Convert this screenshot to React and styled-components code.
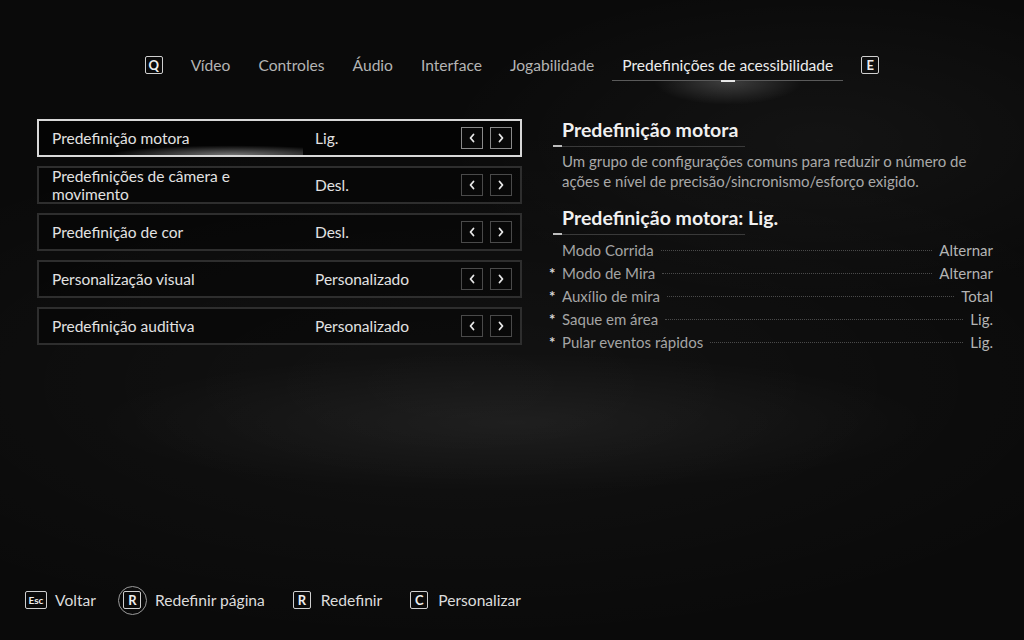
import React from 'react';
import styled, { createGlobalStyle } from 'styled-components';

const GlobalStyle = createGlobalStyle`
  html, body {
    margin: 0;
    padding: 0;
    background: #0a0a0a;
  }
  * {
    box-sizing: border-box;
  }
`;

const Page = styled.div`
  width: 1024px;
  height: 640px;
  overflow: hidden;
  display: flex;
  flex-direction: column;
  font-family: Lato, "Open Sans", sans-serif;
  color: #dcdcdc;
  background:
    radial-gradient(ellipse 420px 70px at 50% 66%, rgba(255, 255, 255, 0.06), transparent),
    radial-gradient(ellipse 380px 160px at 80% 22%, rgba(255, 255, 255, 0.04), transparent),
    radial-gradient(ellipse 700px 260px at 45% 60%, rgba(255, 255, 255, 0.035), transparent),
    #0a0a0a;
`;

const TabBar = styled.nav`
  display: flex;
  justify-content: center;
  align-items: flex-start;
  gap: 8px;
  padding-top: 55px;
`;

const KeyCap = styled.span`
  display: inline-flex;
  align-items: center;
  justify-content: center;
  min-width: ${({ $w }) => $w || 18}px;
  height: 18px;
  padding: 0 2px;
  border: 1.5px solid #cfcfcf;
  border-radius: 2px;
  font-size: ${({ $small }) => ($small ? 10 : 13)}px;
  font-weight: 700;
  color: #eeeeee;
  line-height: 1;
  margin: ${({ $m }) => $m || '0'};
`;

const Tab = styled.div`
  position: relative;
  padding: 0 10px 5px;
  font-size: 15.6px;
  line-height: 20px;
  color: ${({ $active }) => ($active ? '#ececec' : '#b4b4b4')};
  border-bottom: 1px solid ${({ $active }) => ($active ? '#5a5a5a' : 'transparent')};
  white-space: nowrap;

  ${({ $active }) =>
    $active &&
    `
    &::before {
      content: '';
      position: absolute;
      left: 50%;
      bottom: -2px;
      width: 14px;
      height: 2px;
      margin-left: -7px;
      background: #e6e6e6;
    }
    &::after {
      content: '';
      position: absolute;
      left: 50%;
      top: 26px;
      width: 150px;
      height: 24px;
      margin-left: -75px;
      background: radial-gradient(ellipse at 50% 0%, rgba(255,255,255,0.2), transparent 70%);
    }
  `}
`;

const Main = styled.main`
  display: flex;
  align-items: flex-start;
  gap: 31px;
  padding: 0 0 0 37px;
  margin-top: 38px;
`;

const OptionList = styled.div`
  width: 485px;
  display: flex;
  flex-direction: column;
  gap: 9px;
`;

const OptionRow = styled.div`
  position: relative;
  height: 38px;
  display: flex;
  align-items: center;
  padding: 0 8px 0 13px;
  border: ${({ $active }) => ($active ? '2px solid #d8d8d8' : '2px solid #2e2e2e')};
  background: ${({ $active }) => ($active ? 'rgba(0,0,0,0.55)' : 'rgba(0,0,0,0.35)')};

  ${({ $active }) =>
    $active &&
    `
    &::after {
      content: '';
      position: absolute;
      left: 10px;
      bottom: 0;
      width: 254px;
      height: 12px;
      background: radial-gradient(ellipse 60% 100% at 72% 100%, rgba(255,255,255,0.45), transparent 80%);
      pointer-events: none;
    }
  `}
`;

const OptionLabel = styled.div`
  width: 263px;
  padding-right: 40px;
  font-size: 15.5px;
  line-height: 18px;
  color: #e2e2e2;
`;

const OptionValue = styled.div`
  flex: 1;
  font-size: 15.5px;
  color: #e2e2e2;
`;

const ArrowGroup = styled.div`
  display: flex;
  gap: 7px;
`;

const ArrowButton = styled.span`
  width: 22px;
  height: 22px;
  display: flex;
  align-items: center;
  justify-content: center;
  border: 1px solid ${({ $active }) => ($active ? '#8a8a8a' : '#4a4a4a')};
  background: #080808;
`;

const Chevron = ({ dir }) => (
  <svg width="8" height="10" viewBox="0 0 8 10">
    <path
      d={dir === 'left' ? 'M5.5 1.5 L2.5 5 L5.5 8.5' : 'M2.5 1.5 L5.5 5 L2.5 8.5'}
      fill="none"
      stroke="#e8e8e8"
      strokeWidth="1.8"
      strokeLinecap="round"
      strokeLinejoin="round"
    />
  </svg>
);

const Details = styled.section`
  width: 440px;
  display: flex;
  flex-direction: column;
`;

const DetailTitle = styled.h3`
  margin: ${({ $top }) => $top || 0}px 0 0;
  padding-left: 9px;
  font-size: 19.5px;
  line-height: 22px;
  font-weight: 700;
  color: #f0f0f0;
`;

const TitleRule = styled.div`
  position: relative;
  width: 192px;
  height: 1px;
  margin-top: 5px;
  background: #3a3a3a;

  &::before {
    content: '';
    position: absolute;
    left: 0;
    top: -1px;
    width: 9px;
    height: 2px;
    background: #bdbdbd;
  }
`;

const Description = styled.p`
  margin: 4px 0 0;
  padding-left: 9px;
  font-size: 15px;
  line-height: 20px;
  color: #a9a9a9;
`;

const SummaryList = styled.div`
  display: flex;
  flex-direction: column;
  margin-top: 3px;
`;

const SummaryRow = styled.div`
  display: flex;
  align-items: center;
  height: 23px;
  font-size: 15px;
  color: #a4a4a4;
`;

const Star = styled.span`
  width: 9px;
  margin-left: -4px;
  margin-right: 4px;
  font-size: 15px;
  font-weight: 700;
  color: #d8d8d8;
`;

const Leader = styled.span`
  flex: 1;
  margin: 2px 7px 0;
  border-top: 1px dotted #4a4a4a;
`;

const SummaryValue = styled.span`
  color: #b4b4b4;
`;

const Footer = styled.footer`
  margin-top: auto;
  display: flex;
  align-items: center;
  padding: 0 0 24px 25px;
  height: 56px;
`;

const Hint = styled.div`
  display: flex;
  align-items: center;
  gap: ${({ $gap }) => $gap || 8}px;
  margin-right: ${({ $mr }) => $mr || 28}px;
  font-size: 15.6px;
  color: #dcdcdc;
`;

const RingKey = styled.span`
  width: 29px;
  height: 29px;
  border-radius: 50%;
  border: 1.5px solid #9a9a9a;
  display: flex;
  align-items: center;
  justify-content: center;
`;

const options = [
  { label: 'Predefinição motora', value: 'Lig.', active: true },
  { label: 'Predefinições de câmera e movimento', value: 'Desl.' },
  { label: 'Predefinição de cor', value: 'Desl.' },
  { label: 'Personalização visual', value: 'Personalizado' },
  { label: 'Predefinição auditiva', value: 'Personalizado' },
];

const summary = [
  { star: false, label: 'Modo Corrida', value: 'Alternar' },
  { star: true, label: 'Modo de Mira', value: 'Alternar' },
  { star: true, label: 'Auxílio de mira', value: 'Total' },
  { star: true, label: 'Saque em área', value: 'Lig.' },
  { star: true, label: 'Pular eventos rápidos', value: 'Lig.' },
];

const tabs = ['Vídeo', 'Controles', 'Áudio', 'Interface', 'Jogabilidade', 'Predefinições de acessibilidade'];

const App = () => {
  return (
    <Page>
      <GlobalStyle />
      <TabBar>
        <KeyCap $m="1px 10px 0 0">Q</KeyCap>
        {tabs.map((t, i) => (
          <Tab key={t} $active={i === tabs.length - 1}>{t}</Tab>
        ))}
        <KeyCap $m="1px 0 0 10px">E</KeyCap>
      </TabBar>

      <Main>
        <OptionList>
          {options.map((o) => (
            <OptionRow key={o.label} $active={o.active}>
              <OptionLabel>{o.label}</OptionLabel>
              <OptionValue>{o.value}</OptionValue>
              <ArrowGroup>
                <ArrowButton $active={o.active}><Chevron dir="left" /></ArrowButton>
                <ArrowButton $active={o.active}><Chevron dir="right" /></ArrowButton>
              </ArrowGroup>
            </OptionRow>
          ))}
        </OptionList>

        <Details>
          <DetailTitle>Predefinição motora</DetailTitle>
          <TitleRule />
          <Description>
            Um grupo de configurações comuns para reduzir o número de ações e nível de
            precisão/sincronismo/esforço exigido.
          </Description>
          <DetailTitle $top={16}>Predefinição motora: Lig.</DetailTitle>
          <TitleRule />
          <SummaryList>
            {summary.map((s) => (
              <SummaryRow key={s.label}>
                <Star>{s.star ? '*' : ''}</Star>
                {s.label}
                <Leader />
                <SummaryValue>{s.value}</SummaryValue>
              </SummaryRow>
            ))}
          </SummaryList>
        </Details>
      </Main>

      <Footer>
        <Hint $mr={22}>
          <KeyCap $small $w={22}>Esc</KeyCap>
          Voltar
        </Hint>
        <Hint>
          <RingKey><KeyCap>R</KeyCap></RingKey>
          Redefinir página
        </Hint>
        <Hint $gap={10}>
          <KeyCap>R</KeyCap>
          Redefinir
        </Hint>
        <Hint $gap={10}>
          <KeyCap>C</KeyCap>
          Personalizar
        </Hint>
      </Footer>
    </Page>
  );
};

export default App;
